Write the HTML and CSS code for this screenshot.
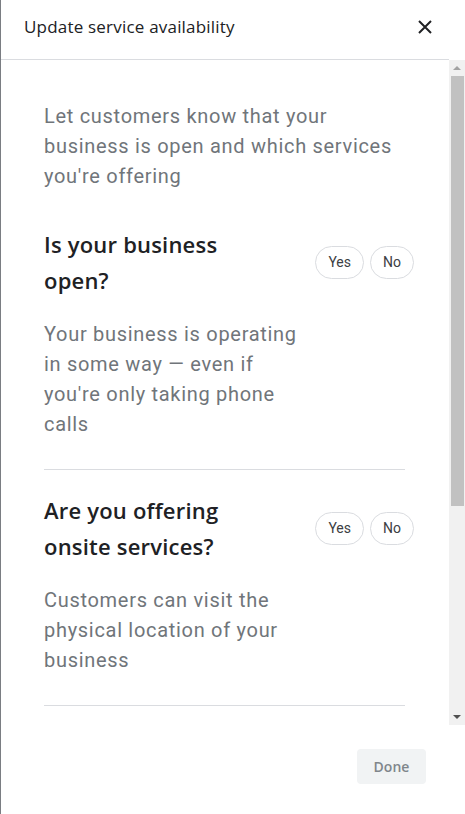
FILE: index.html
```html
<!DOCTYPE html>
<html lang="en">
<head>
<meta charset="utf-8">
<title>Update service availability</title>
<link rel="stylesheet" href="styles.css">
</head>
<body>
<div class="dialog">
  <header class="header">
    <h1 class="title">Update service availability</h1>
    <button class="close" aria-label="Close">
      <svg width="14" height="14" viewBox="0 0 14 14"><path d="M1 1L13 13M13 1L1 13" stroke="#202124" stroke-width="2" fill="none"/></svg>
    </button>
  </header>
  <div class="body">
    <div class="content">
      <p class="intro">Let customers know that your business is open and which services you're offering</p>
      <section class="question">
        <div class="row">
          <h2 class="q-title">Is your business open?</h2>
          <div class="choices"><button class="pill">Yes</button><button class="pill">No</button></div>
        </div>
        <p class="desc">Your business is operating in some way — even if you're only taking phone calls</p>
      </section>
      <section class="question">
        <div class="row">
          <h2 class="q-title">Are you offering onsite services?</h2>
          <div class="choices"><button class="pill">Yes</button><button class="pill">No</button></div>
        </div>
        <p class="desc">Customers can visit the physical location of your business</p>
      </section>
    </div>
    <div class="scrollbar">
      <div class="sb-btn"><span class="arrow-up"></span></div>
      <div class="sb-thumb"></div>
      <div class="sb-track"></div>
      <div class="sb-btn"><span class="arrow-down"></span></div>
    </div>
  </div>
  <footer class="footer">
    <button class="done">Done</button>
  </footer>
</div>
</body>
</html>
```
FILE: styles.css
```css
* { box-sizing: border-box; }
html, body { margin: 0; padding: 0; height: 100%; overflow: hidden; background: #fff; }
body { font-family: Roboto, "Liberation Sans", sans-serif; }
.dialog {
  height: 814px;
  display: flex;
  flex-direction: column;
  border-left: 1px solid #7a7d82;
}
.header {
  height: 60px;
  flex: none;
  display: flex;
  align-items: center;
  justify-content: space-between;
  padding: 0 33px 0 23px;
  margin-right: 16px;
  border-bottom: 1px solid #dadce0;
}
.title {
  margin: 0;
  font-family: "Open Sans", sans-serif;
  font-weight: 400;
  font-size: 17px;
  color: #202124;
  letter-spacing: 0.2px;
  padding-bottom: 6px;
}
.close {
  border: 0;
  background: none;
  padding: 0;
  width: 14px;
  height: 14px;
  display: flex;
  margin-bottom: 5px;
  margin-right: -16px;
}
.body {
  height: 665px;
  flex: none;
  display: flex;
  overflow: hidden;
}
.content {
  flex: 1;
  overflow: hidden;
  padding: 41px 44px 0 43px;
}
.intro {
  margin: 0;
  font-size: 20px;
  line-height: 30px;
  letter-spacing: 0.7px;
  color: #70757a;
}
.question {
  border-bottom: 1px solid #dadce0;
  padding-bottom: 30px;
}
.question + .question { padding-top: 22px; }
.question:first-of-type { padding-top: 35px; }
.row {
  display: flex;
  align-items: center;
  justify-content: space-between;
}
.q-title {
  margin: 0;
  width: 220px;
  font-family: "Open Sans", sans-serif;
  font-weight: 600;
  font-size: 22px;
  line-height: 36px;
  letter-spacing: 0.2px;
  color: #202124;
}
.choices {
  display: flex;
  gap: 6px;
  margin-right: -9px;
}
.pill {
  height: 33px;
  border: 1px solid #dadce0;
  border-radius: 17px;
  background: #fff;
  font-family: Roboto, sans-serif;
  font-size: 14px;
  color: #3c4043;
  padding: 0 12px;
}
.desc {
  margin: 21px 0 0;
  width: 262px;
  font-size: 20px;
  line-height: 30px;
  letter-spacing: 0.7px;
  color: #70757a;
}
.scrollbar {
  width: 16px;
  flex: none;
  background: #f1f1f1;
  display: flex;
  flex-direction: column;
}
.sb-btn {
  height: 16px;
  flex: none;
  display: flex;
  align-items: center;
  justify-content: center;
}
.arrow-up {
  width: 0; height: 0;
  border-left: 4px solid transparent;
  border-right: 4px solid transparent;
  border-bottom: 4px solid #a3a3a3;
}
.arrow-down {
  width: 0; height: 0;
  border-left: 4px solid transparent;
  border-right: 4px solid transparent;
  border-top: 4px solid #505050;
}
.sb-thumb {
  height: 430px;
  flex: none;
  margin: 0 1px 0 2px;
  background: #c1c1c1;
}
.sb-track { flex: 1; }
.footer {
  flex: 1;
  display: flex;
  justify-content: flex-end;
  align-items: flex-start;
  padding: 24px 39px 0 0;
}
.done {
  width: 69px;
  height: 35px;
  border: 0;
  border-radius: 4px;
  background: #f1f3f4;
  color: #80868b;
  font-family: "Open Sans", sans-serif;
  font-weight: 600;
  font-size: 14px;
}
```
